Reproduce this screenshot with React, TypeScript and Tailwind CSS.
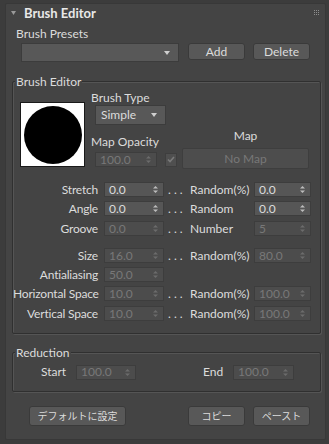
import React from 'react';

// Brush editor rollout, 3ds Max dark theme

const FONT = { fontFamily: 'Lato, "Noto Sans CJK JP", sans-serif' };
const JP = { fontFamily: '"Noto Sans CJK JP", sans-serif' };

function Arrows({ disabled }: { disabled?: boolean }) {
    const c = disabled ? '#6c6c6c' : '#bdbdbd';
    return (
        <svg width="5" height="9" viewBox="0 0 5 9" className="shrink-0">
            <path d="M0 3.5 L2.5 1 L5 3.5 Z" fill={c} />
            <path d="M0 5.5 L2.5 8 L5 5.5 Z" fill={c} />
        </svg>
    );
}

function Spinner({ value, w, disabled }: { value: string; w: string; disabled?: boolean }) {
    return (
        <div
            className={`${w} h-[15px] shrink-0 flex items-center justify-between pl-[4px] pr-[5px] border border-[#3d3d3d] ${
                disabled ? 'bg-[#4c4c4c] text-[#787878]' : 'bg-[#565656] text-[#dcdcdc]'
            }`}
        >
            <span className="leading-none">{value}</span>
            <Arrows disabled={disabled} />
        </div>
    );
}

function Button({ label, w, h, jp }: { label: string; w: string; h: string; jp?: boolean }) {
    return (
        <button
            className={`${w} ${h} shrink-0 rounded-[3px] bg-[#585858] border border-[#3a3a3a] text-[#dcdcdc] leading-none flex items-center justify-center ${
                jp ? 'text-[10px]' : 'text-[12px]'
            }`}
            style={jp ? JP : undefined}
        >
            {label}
        </button>
    );
}

function Row({
    label, value, disabled, rLabel, rValue, rDisabled, mt,
}: {
    label: string; value: string; disabled?: boolean;
    rLabel?: string; rValue?: string; rDisabled?: boolean; mt: string;
}) {
    return (
        <div className={`flex items-center h-[15px] ${mt}`}>
            <div className="w-[85px] text-right whitespace-nowrap tracking-[-0.2px] text-[#dcdcdc]">{label}</div>
            <div className="ml-[6px]">
                <Spinner value={value} w="w-[60px]" disabled={disabled} />
            </div>
            {rLabel && (
                <>
                    <div className="w-[26px] pl-[4px] text-[#dcdcdc] whitespace-nowrap">. . .</div>
                    <div className="w-[64px] whitespace-nowrap text-[#dcdcdc]">{rLabel}</div>
                    <Spinner value={rValue ?? ''} w="w-[57px]" disabled={rDisabled} />
                </>
            )}
        </div>
    );
}

function Group({ title, className, children }: { title: string; className: string; children: React.ReactNode }) {
    return (
        <div className={`relative border border-[#303030] rounded-[2px] shadow-[1px_1px_0_#555555,inset_1px_1px_0_#555555] ${className}`}>
            <span className="absolute -top-[8px] left-[2px] px-[1px] bg-[#444444] text-[#dcdcdc] whitespace-nowrap">{title}</span>
            {children}
        </div>
    );
}

export default function App() {
    return (
        <div className="w-[329px] h-[444px] bg-[#3c3c3c] pt-[3px] pl-[5px] text-[12px] leading-[16px]" style={FONT}>
            <div className="w-[321px] h-[437px] bg-[#444444] border border-[#383838] rounded-[2px]">
                {/* Header */}
                <div className="h-[18px] flex items-center">
                    <svg width="5" height="4" viewBox="0 0 5 4" className="ml-[5px] mr-[8px]">
                        <path d="M0 0 L5 0 L2.5 4 Z" fill="#9a9a9a" />
                    </svg>
                    <span className="font-bold text-[13px] text-[#e8e8e8]">Brush Editor</span>
                    <div className="ml-auto mr-[6px] mt-[-2px] grid grid-cols-3 gap-[1px]">
                        {Array.from({ length: 9 }).map((_, i) => (
                            <span key={i} className="w-[1px] h-[1px] bg-[#8e8e8e]" />
                        ))}
                    </div>
                </div>

                {/* Brush presets */}
                <div className="mt-[4px] pl-[10px] text-[#dcdcdc]">Brush Presets</div>
                <div className="flex items-start mt-[1px] pl-[15px]">
                    <div className="w-[158px] h-[19px] bg-[#585858] border border-[#3c3c3c] flex items-center justify-end pr-[8px]">
                        <svg width="6" height="4" viewBox="0 0 6 4"><path d="M0 0 L6 0 L3 4 Z" fill="#cfcfcf" /></svg>
                    </div>
                    <div className="ml-[9px]"><Button label="Add" w="w-[57px]" h="h-[17px]" /></div>
                    <div className="ml-[8px]"><Button label="Delete" w="w-[57px]" h="h-[17px]" /></div>
                </div>

                {/* Brush editor group */}
                <Group title="Brush Editor" className="ml-[6px] mt-[19px] w-[309px] h-[253px]">
                    <div className="flex items-start mt-[8px]">
                        <div className="ml-[7px] mt-[12px] w-[65px] h-[65px] bg-white border border-[#1a1a1a] flex items-center justify-center">
                            <div className="w-[58px] h-[58px] rounded-full bg-black" />
                        </div>
                        <div className="ml-[6px] w-[225px]">
                            <div className="text-[#dcdcdc]">Brush Type</div>
                            <div className="ml-[4px] mt-[-1px] w-[71px] h-[20px] bg-[#585858] border border-[#3c3c3c] flex items-center justify-between pl-[5px] pr-[8px] text-[#dcdcdc]">
                                <span>Simple</span>
                                <svg width="6" height="4" viewBox="0 0 6 4"><path d="M0 0 L6 0 L3 4 Z" fill="#cfcfcf" /></svg>
                            </div>
                            <div className="flex items-start">
                                <div className="mt-[9px]">
                                    <div className="text-[#dcdcdc]">Map Opacity</div>
                                    <div className="flex items-center mt-[2px] ml-[4px]">
                                        <Spinner value="100.0" w="w-[62px]" disabled />
                                        <div className="ml-[8px] w-[12px] h-[14px] bg-[#4f4f4f] border border-[#3e3e3e] flex items-center justify-center">
                                            <svg width="8" height="7" viewBox="0 0 8 7"><path d="M1 3.5 L3 5.5 L7 1" stroke="#7a7a7a" strokeWidth="1.6" fill="none" /></svg>
                                        </div>
                                    </div>
                                </div>
                                <div className="ml-[5px] mt-[3px]">
                                    <div className="text-center text-[#dcdcdc]">Map</div>
                                    <div className="mt-[4px] w-[127px] h-[21px] bg-[#4d4d4d] border border-[#3e3e3e] rounded-[2px] flex items-center justify-center text-[#787878]">No Map</div>
                                </div>
                            </div>
                        </div>
                    </div>

                    <Row label="Stretch" value="0.0" rLabel="Random(%)" rValue="0.0" mt="mt-[13px]" />
                    <Row label="Angle" value="0.0" rLabel="Random" rValue="0.0" mt="mt-[4px]" />
                    <Row label="Groove" value="0.0" disabled rLabel="Number" rValue="5" rDisabled mt="mt-[5px]" />
                    <Row label="Size" value="16.0" disabled rLabel="Random(%)" rValue="80.0" rDisabled mt="mt-[12px]" />
                    <Row label="Antialiasing" value="50.0" disabled mt="mt-[4px]" />
                    <Row label="Horizontal Space" value="10.0" disabled rLabel="Random(%)" rValue="100.0" rDisabled mt="mt-[4px]" />
                    <Row label="Vertical Space" value="10.0" disabled rLabel="Random(%)" rValue="100.0" rDisabled mt="mt-[5px]" />
                </Group>

                {/* Reduction group */}
                <Group title="Reduction" className="ml-[6px] mt-[18px] w-[309px] h-[40px]">
                    <div className="flex items-center mt-[11px] text-[#dcdcdc]">
                        <span className="ml-[28px] w-[35px]">Start</span>
                        <Spinner value="100.0" w="w-[60px]" disabled />
                        <span className="ml-[67px] w-[30px]">End</span>
                        <Spinner value="100.0" w="w-[61px]" disabled />
                    </div>
                </Group>

                {/* Footer buttons */}
                <div className="flex items-center mt-[14px] pl-[23px]">
                    <Button label="デフォルトに設定" w="w-[97px]" h="h-[20px]" jp />
                    <div className="ml-[62px]"><Button label="コピー" w="w-[57px]" h="h-[20px]" jp /></div>
                    <div className="ml-[8px]"><Button label="ペースト" w="w-[57px]" h="h-[20px]" jp /></div>
                </div>
            </div>
        </div>
    );
}
